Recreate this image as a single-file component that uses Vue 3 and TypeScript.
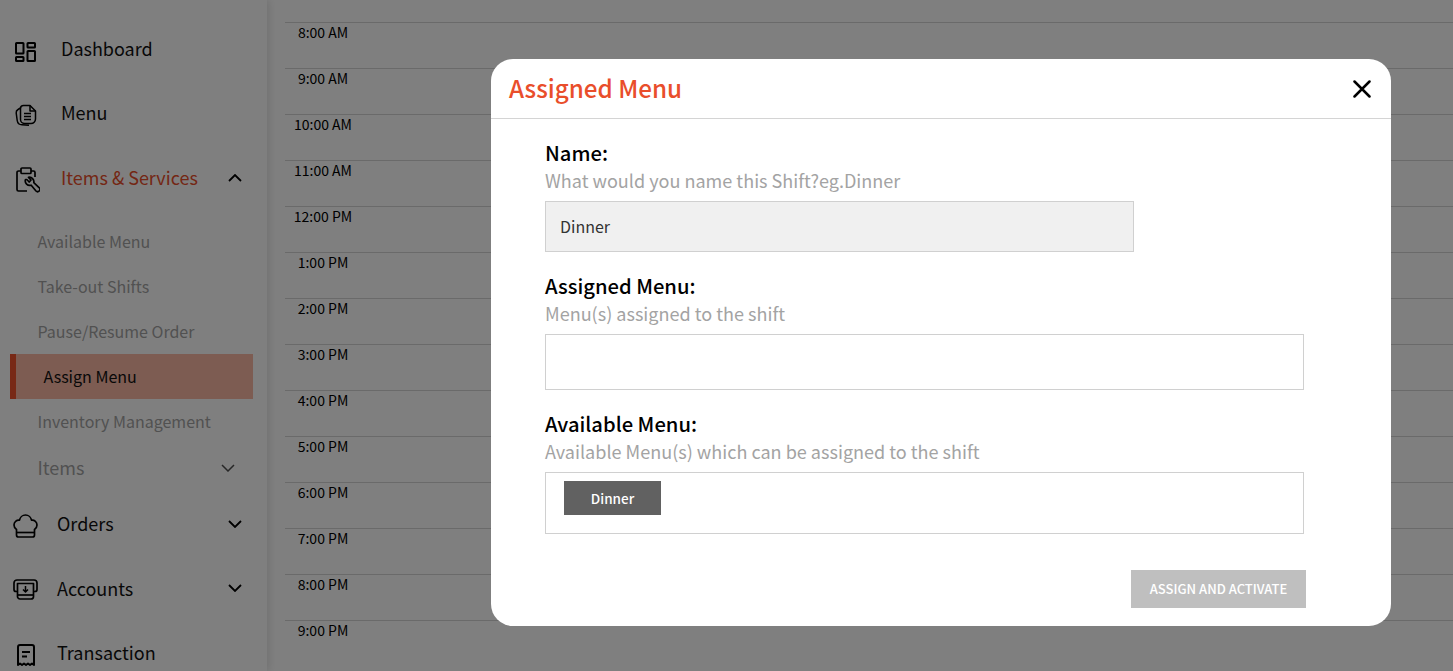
<script setup lang="ts">
const hours: string[] = ['8:00 AM','9:00 AM','10:00 AM','11:00 AM','12:00 PM','1:00 PM','2:00 PM','3:00 PM','4:00 PM','5:00 PM','6:00 PM','7:00 PM','8:00 PM','9:00 PM']
const subs: string[] = ['Available Menu','Take-out Shifts','Pause/Resume Order','Assign Menu','Inventory Management']
</script>

<template>
  <div class="page">
    <aside class="side">
      <div class="row up">
        <svg class="ic i-dash" viewBox="0 0 21 20" fill="none" stroke="#000" stroke-width="2"><rect x="1" y="1" width="7.500" height="10.500" rx=".6"/><rect x="12.500" y="1" width="7.500" height="4.500" rx=".6"/><rect x="1" y="15" width="7.500" height="4" rx=".6"/><rect x="12.500" y="9" width="7.500" height="10" rx=".6"/></svg>
        <span class="lbl">Dashboard</span>
      </div>
      <div class="row up">
        <svg class="ic i-menu" viewBox="0 0 22 22" fill="none" stroke="#000" stroke-width="1.500" stroke-linejoin="round"><path d="M8.500 1.500H15L20.500 7v8a4.500 4.500 0 0 1-4.500 4.500H9.500A4 4 0 0 1 5.500 15.500V4.500a3 3 0 0 1 3-3z"/><path d="M15 1.500V7h5.500"/><path d="M5.500 4 3 5.500A3.500 3.500 0 0 0 1.200 9l1 7.500A5 5 0 0 0 7 20.800l7 .4"/><path d="M9 9.500h7M9 12.500h7M9 15.500h7"/></svg>
        <span class="lbl">Menu</span>
      </div>
      <div class="row r3 up open">
        <svg class="ic i-items" viewBox="0 0 24 26" fill="none" stroke="#000" stroke-width="1.700" stroke-linejoin="round"><path d="M5 4H2.500A1.500 1.500 0 0 0 1 5.500v17A1.500 1.500 0 0 0 2.500 24H11M15 4h2.500A1.500 1.500 0 0 1 19 5.500V10"/><rect x="5" y="1" width="10" height="5.500" rx="1"/><path d="M9.500 12.500a4.500 4.500 0 0 0 5.700 5.700l4.800 5.800a2.300 2.300 0 0 0 3.300-3.200l-5.500-5.200a4.500 4.500 0 0 0-5.300-5.300l2.500 2.700-1.800 2-2.400-2.500z"/></svg>
        <span class="lbl">Items &amp; Services</span>
        <svg class="chev" viewBox="0 0 14 8" fill="none" stroke="#000" stroke-width="1.800"><path d="M1 7l6-6 6 6"/></svg>
      </div>
      <div class="subs">
        <div v-for="s in subs" :key="s" class="sub" :class="{ active: s === 'Assign Menu' }">{{ s }}</div>
      </div>
      <div class="row r4 up">
        <span class="items">Items</span>
        <svg class="chev dim" viewBox="0 0 14 8" fill="none" stroke="#4f4f4f" stroke-width="1.500"><path d="M1 1l6 6 6-6"/></svg>
      </div>
      <div class="row r5 up">
        <svg class="ic i-orders" viewBox="0 0 25 24" fill="none" stroke="#000" stroke-width="1.700" stroke-linejoin="round"><path d="M3.500 15.500C2 14.500 1 13 1 11c0-3 2.500-5.200 5.500-4.800C7 3.300 9.500 1 12.500 1s5.500 2.300 6 5.200C21.500 5.800 24 8 24 11c0 2-1 3.500-2.500 4.500V21a2 2 0 0 1-2 2h-14a2 2 0 0 1-2-2z"/><path d="M3.500 18.500h18"/></svg>
        <span class="lbl">Orders</span>
        <svg class="chev" viewBox="0 0 14 8" fill="none" stroke="#000" stroke-width="1.800"><path d="M1 1l6 6 6-6"/></svg>
      </div>
      <div class="row r6">
        <svg class="ic i-acc" viewBox="0 0 25 21" fill="none" stroke="#000" stroke-width="1.700" stroke-linejoin="round"><path d="M4.500 12.500H3a2 2 0 0 1-2-2V4a3 3 0 0 1 3-3h17a3 3 0 0 1 3 3v6.500a2 2 0 0 1-2 2h-1.500"/><path d="M4.500 4.500h16v13a2.500 2.500 0 0 1-2.500 2.500H7a2.500 2.500 0 0 1-2.500-2.500z"/><path d="M4.500 16h16"/><path d="M12.500 7v5.500M10 10.500l2.500 2.500 2.500-2.500" stroke-width="1.500"/></svg>
        <span class="lbl">Accounts</span>
        <svg class="chev" viewBox="0 0 14 8" fill="none" stroke="#000" stroke-width="1.800"><path d="M1 1l6 6 6-6"/></svg>
      </div>
      <div class="row">
        <svg class="ic i-trans" viewBox="0 0 18 22" fill="none" stroke="#000" stroke-width="2" stroke-linejoin="round"><path d="M1 21V3a2 2 0 0 1 2-2h12a2 2 0 0 1 2 2v18l-2-1.500-2 1.500-2-1.500L9 21l-2-1.500L5 21l-2-1.500z"/><path d="M5 8h8M5 12.500h5"/></svg>
        <span class="lbl">Transaction</span>
      </div>
    </aside>

    <main class="sched">
      <div v-for="h in hours" :key="h" class="slot"><span class="time">{{ h }}</span></div>
    </main>

    <div class="overlay">
      <section class="modal">
        <header class="head">
          <h2 class="title">Assigned Menu</h2>
          <svg class="close" viewBox="0 0 18 18" fill="none" stroke="#000" stroke-width="2.500" stroke-linecap="round"><path d="M1.500 1.500l15 15M16.500 1.500l-15 15"/></svg>
        </header>
        <div class="body">
          <div class="name">Name:</div>
          <div class="hint">What would you name this Shift?eg.Dinner</div>
          <div class="input">Dinner</div>
          <div class="name n2">Assigned Menu:</div>
          <div class="hint">Menu(s) assigned to the shift</div>
          <div class="box b1"></div>
          <div class="name n3">Available Menu:</div>
          <div class="hint">Available Menu(s) which can be assigned to the shift</div>
          <div class="box b2"><span class="chip">Dinner</span></div>
          <div class="foot"><button class="assign" type="button">ASSIGN AND ACTIVATE</button></div>
        </div>
      </section>
    </div>
  </div>
</template>

<style>
html, body { margin: 0; height: 100%; overflow: hidden; }
</style>

<style scoped>
.page { position: relative; display: flex; height: 671px; overflow: hidden; background: #fff; font-family: "Noto Sans CJK KR", "Noto Sans", sans-serif; color: #000; }
.side { width: 267px; flex: none; box-shadow: 2px 0 8px rgba(0,0,0,.12); display: flex; flex-direction: column; padding-top: 17px; box-sizing: border-box; }
.row { display: flex; align-items: center; height: 64px; flex: none; position: relative; }
.lbl { font-size: 18px; color: #111; line-height: 24px; }
.up .lbl, .up .items { padding-bottom: 2px; }
.ic { flex: none; }
.i-dash { width: 21px; height: 20px; margin: 6px 25px 0 15px; }
.i-menu { width: 22px; height: 22px; margin: 4px 24px 0 15px; }
.i-items { width: 24px; height: 26px; margin: 4px 21px 0 16px; }
.i-orders { width: 25px; height: 24px; margin: 5px 19px 0 13px; }
.i-acc { width: 25px; height: 21px; margin: 2px 19px 0 13px; }
.i-trans { width: 18px; height: 22px; margin: 6px 22px 0 17px; }
.r3 { height: 65px; }
.open .lbl { color: #e94e2b; }
.chev { position: absolute; right: 25px; width: 14px; height: 8px; }
.chev.dim { right: 32px; }
.subs { display: flex; flex-direction: column; padding-top: 9px; }
.sub { height: 45px; line-height: 45px; font-size: 16px; color: #a3a3a3; padding-left: 37.500px; box-sizing: border-box; }
.sub.active { margin-left: 10px; width: 243px; padding-left: 27.500px; color: #111; background: #fab8a4; border-left: 6px solid #f0532d; }
.r4 { height: 47px; }
.items { font-size: 18px; color: #a3a3a3; margin-left: 37.500px; }
.r5 { height: 65px; }
.sched { flex: 1; padding-top: 22px; padding-left: 18px; }
.slot { height: 46px; border-top: 1px solid #d4d4d4; box-sizing: border-box; width: 100%; }
.time { display: block; width: 76px; text-align: center; font-size: 14px; line-height: 19px; color: #000; }
.overlay { position: absolute; inset: 0; background: rgba(0,0,0,.5); padding: 59px 0 0 491px; box-sizing: border-box; }
.modal { width: 900px; height: 567px; background: #fff; border-radius: 22px; overflow: hidden; }
.head { height: 59px; border-bottom: 1px solid #d4d4d4; display: flex; align-items: center; justify-content: space-between; padding: 0 20px 0 18px; }
.title { margin: 0 0 2px; font-size: 24.200px; font-weight: 500; color: #e94e2b; line-height: 57px; }
.close { width: 18px; height: 18px; margin-top: 1px; }
.body { padding: 20px 87px 0 54px; }
.name { font-size: 20.200px; font-weight: 500; color: #000; line-height: 28px; }
.n2 { margin-top: 20px; }
.n3 { margin-top: 20px; }
.hint { font-size: 18.060px; color: #a3a3a3; line-height: 28px; margin-top: -1px; }
.input { margin-top: 7px; width: 589px; height: 51px; box-sizing: border-box; background: #f0f0f0; border: 1px solid #d0d0d0; padding-left: 14px; font-size: 16px; line-height: 48px; color: #333; }
.box { margin-top: 7px; width: 759px; box-sizing: border-box; border: 1px solid #d0d0d0; }
.b1 { height: 56px; }
.b2 { height: 62px; padding: 8px 18px; }
.chip { display: flex; align-items: center; justify-content: center; width: 97px; height: 34px; background: #616161; color: #fff; font-size: 13.500px; font-weight: 500; }
.foot { display: flex; justify-content: flex-end; margin-top: 36px; width: 761px; }
.assign { width: 175px; height: 38px; border: 0; background: #bfbfbf; color: #fff; font: 500 13px "Noto Sans CJK KR", "Noto Sans", sans-serif; padding: 0 0 2px; }
</style>
